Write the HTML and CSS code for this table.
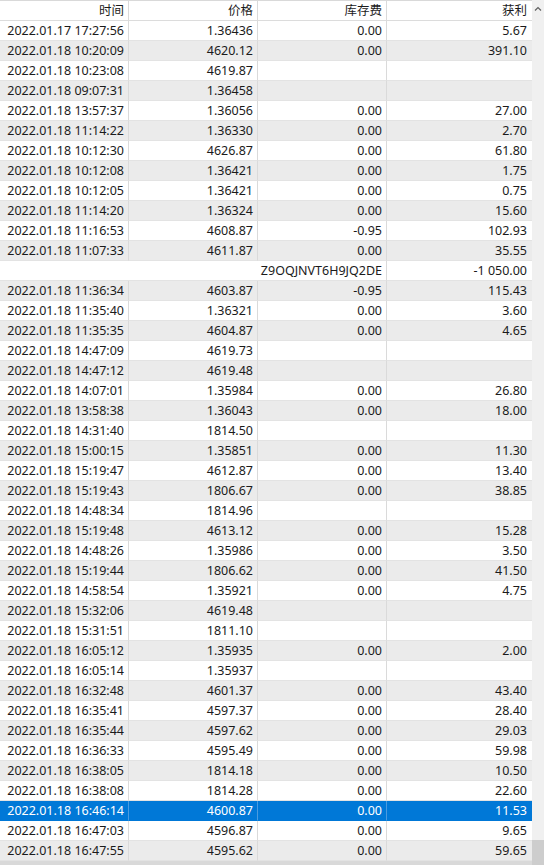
FILE: index.html
```html
<!DOCTYPE html>
<html lang="zh">
<head>
  <meta charset="UTF-8" />
  <meta name="viewport" content="width=device-width, initial-scale=1.0"/>
  <title>交易历史</title>
  <link rel="stylesheet" href="styles.css">
</head>
<body>

  <div class="window">
    <div class="grid">
      <div class="row head">
        <div class="cell">时间</div>
        <div class="cell">价格</div>
        <div class="cell">库存费</div>
        <div class="cell">获利</div>
      </div>
      <div id="rows"></div>
      <div class="hscroll"></div>
    </div>

    <div class="vscroll">
      <svg class="arrow" width="12" height="12" viewBox="0 0 12 12">
        <path d="M3 7.5 L6 4.5 L9 7.5" fill="none" stroke="#606060" stroke-width="1.2"/>
      </svg>
      <div class="thumb"></div>
    </div>
  </div>

  <script>
    // time, price, swap, profit  (empty string = blank cell)
    const deals = [
      ['2022.01.17 17:27:56', '1.36436', '0.00', '5.67'],
      ['2022.01.18 10:20:09', '4620.12', '0.00', '391.10'],
      ['2022.01.18 10:23:08', '4619.87', '', ''],
      ['2022.01.18 09:07:31', '1.36458', '', ''],
      ['2022.01.18 13:57:37', '1.36056', '0.00', '27.00'],
      ['2022.01.18 11:14:22', '1.36330', '0.00', '2.70'],
      ['2022.01.18 10:12:30', '4626.87', '0.00', '61.80'],
      ['2022.01.18 10:12:08', '1.36421', '0.00', '1.75'],
      ['2022.01.18 10:12:05', '1.36421', '0.00', '0.75'],
      ['2022.01.18 11:14:20', '1.36324', '0.00', '15.60'],
      ['2022.01.18 11:16:53', '4608.87', '-0.95', '102.93'],
      ['2022.01.18 11:07:33', '4611.87', '0.00', '35.55'],
      { comment: 'Z9OQJNVT6H9JQ2DE', profit: '-1 050.00' },
      ['2022.01.18 11:36:34', '4603.87', '-0.95', '115.43'],
      ['2022.01.18 11:35:40', '1.36321', '0.00', '3.60'],
      ['2022.01.18 11:35:35', '4604.87', '0.00', '4.65'],
      ['2022.01.18 14:47:09', '4619.73', '', ''],
      ['2022.01.18 14:47:12', '4619.48', '', ''],
      ['2022.01.18 14:07:01', '1.35984', '0.00', '26.80'],
      ['2022.01.18 13:58:38', '1.36043', '0.00', '18.00'],
      ['2022.01.18 14:31:40', '1814.50', '', ''],
      ['2022.01.18 15:00:15', '1.35851', '0.00', '11.30'],
      ['2022.01.18 15:19:47', '4612.87', '0.00', '13.40'],
      ['2022.01.18 15:19:43', '1806.67', '0.00', '38.85'],
      ['2022.01.18 14:48:34', '1814.96', '', ''],
      ['2022.01.18 15:19:48', '4613.12', '0.00', '15.28'],
      ['2022.01.18 14:48:26', '1.35986', '0.00', '3.50'],
      ['2022.01.18 15:19:44', '1806.62', '0.00', '41.50'],
      ['2022.01.18 14:58:54', '1.35921', '0.00', '4.75'],
      ['2022.01.18 15:32:06', '4619.48', '', ''],
      ['2022.01.18 15:31:51', '1811.10', '', ''],
      ['2022.01.18 16:05:12', '1.35935', '0.00', '2.00'],
      ['2022.01.18 16:05:14', '1.35937', '', ''],
      ['2022.01.18 16:32:48', '4601.37', '0.00', '43.40'],
      ['2022.01.18 16:35:41', '4597.37', '0.00', '28.40'],
      ['2022.01.18 16:35:44', '4597.62', '0.00', '29.03'],
      ['2022.01.18 16:36:33', '4595.49', '0.00', '59.98'],
      ['2022.01.18 16:38:05', '1814.18', '0.00', '10.50'],
      ['2022.01.18 16:38:08', '1814.28', '0.00', '22.60'],
      ['2022.01.18 16:46:14', '4600.87', '0.00', '11.53'],
      ['2022.01.18 16:47:03', '4596.87', '0.00', '9.65'],
      ['2022.01.18 16:47:55', '4595.62', '0.00', '59.65']
    ];

    const selected = 39;
    const rows = document.getElementById('rows');

    deals.forEach((deal, i) => {
      const row = document.createElement('div');
      row.className = 'row' + (i % 2 ? ' alt' : '') + (i === selected ? ' selected' : '');

      if (Array.isArray(deal)) {
        row.innerHTML = deal.map(v => `<div class="cell">${v}</div>`).join('');
      } else {
        row.innerHTML = `
          <div class="cell wide">${deal.comment}</div>
          <div class="cell">${deal.profit}</div>
        `;
      }

      rows.appendChild(row);
    });
  </script>

</body>
</html>
```

FILE: styles.css
```css
html, body {
  margin: 0;
  padding: 0;
  overflow: hidden;
}
body {
  font-family: "Noto Sans", "Noto Sans CJK SC", sans-serif;
  font-size: 12.5px;
  color: #1b1b1b;
  background: #ffffff;
}
.window {
  display: flex;
  width: 544px;
  height: 865px;
}
.grid {
  width: 532px;
  display: flex;
  flex-direction: column;
}
.row {
  display: grid;
  grid-template-columns: 129px 129px 129px 145px;
  height: 20px;
  background: #ffffff;
}
.row.alt {
  background: #ebebeb;
}
.row.selected {
  background: #0078d7;
  color: #ffffff;
}
.cell {
  box-sizing: border-box;
  height: 20px;
  padding: 0 4px 0 0;
  line-height: 19px;
  text-align: right;
  white-space: nowrap;
  overflow: hidden;
  border-right: 1px solid #dadada;
  border-bottom: 1px solid #e3e3e3;
}
.cell:last-child {
  border-right: none;
  padding-right: 5px;
}
.cell.wide {
  grid-column: span 3;
}
.row.selected .cell {
  border-right-color: #4a9be0;
  border-bottom-color: #0078d7;
}
.head {
  height: 21px;
  border-top: 1px solid #d9d9d9;
  box-sizing: border-box;
}
.head .cell {
  height: 20px;
  border-bottom-color: #dcdcdc;
}
.hscroll {
  flex: 1;
  background: #d9d9d9;
}
.vscroll {
  width: 12px;
  height: 865px;
  background: #f0f0f0;
  display: flex;
  flex-direction: column;
  justify-content: space-between;
}
.arrow {
  display: block;
  margin-top: 3px;
}
.thumb {
  height: 25px;
  background: #cdcdcd;
}
```
